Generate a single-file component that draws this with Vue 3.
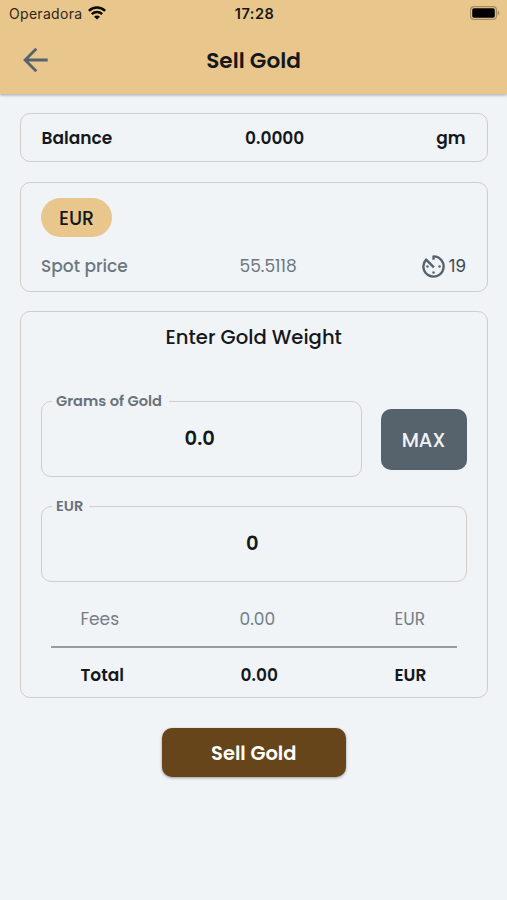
<script setup>
import { ref } from 'vue'

const balance = ref('0.0000')
const spotPrice = ref('55.5118')
const countdown = ref(19)
const grams = ref('0.0')
const amount = ref('0')
</script>

<template>
  <div class="screen">
    <header class="header">
      <div class="status">
        <div class="carrier">
          <span class="carrier-name">Operadora</span>
          <svg class="wifi" viewBox="0 0 18 14">
            <path d="M.9 4.9C5.4.5 12.6.5 17.1 4.9M3.8 8.1c3-2.8 7.4-2.8 10.4 0" fill="none" stroke="#0c0a06" stroke-width="2.5" />
            <path d="M9 13.6 6 10.7c1.7-1.5 4.3-1.5 6 0z" fill="#0c0a06" />
          </svg>
        </div>
        <span class="clock">17:28</span>
        <svg class="battery" viewBox="0 0 30 14">
          <rect x=".6" y=".6" width="25.8" height="12.8" rx="3.4" fill="none" stroke="#a58b60" stroke-width="1.2" />
          <rect x="2.2" y="2.2" width="22.6" height="9.6" rx="1.8" fill="#000" />
          <path d="M27.6 4.6c2.4.8 2.4 4 0 4.8z" fill="#a58b60" />
        </svg>
      </div>
      <div class="toolbar">
        <svg class="back" viewBox="0 0 26 26">
          <path d="M24.7 13H2.5M13.3 1.8 2.1 13l11.2 11.2" fill="none" stroke="#57636c" stroke-width="2.8" />
        </svg>
        <h1 class="title">Sell Gold</h1>
      </div>
    </header>

    <main class="content">
      <section class="card balance">
        <span class="balance-label">Balance</span>
        <span class="balance-value">{{ balance }}</span>
        <span class="balance-unit">gm</span>
      </section>

      <section class="card spot">
        <span class="chip">EUR</span>
        <div class="spot-row">
          <span class="spot-label">Spot price</span>
          <span class="spot-value">{{ spotPrice }}</span>
          <span class="timer">
            <svg class="timer-icon" viewBox="0 0 24 24">
              <path d="M12 5.4V2.3A9.7 9.7 0 1 1 4.9 5.4L12.4 12.9" fill="none" stroke="#57636c" stroke-width="2.3" stroke-linejoin="round" />
              <g fill="#57636c"><circle cx="6.2" cy="12" r="1.2" /><circle cx="17.8" cy="12" r="1.2" /><circle cx="12" cy="17.8" r="1.2" /></g>
            </svg>
            <span class="timer-value">{{ countdown }}</span>
          </span>
        </div>
      </section>

      <section class="card order">
        <h2 class="order-title">Enter Gold Weight</h2>
        <div class="grams-row">
          <div class="field grams">
            <label class="field-label grams-label">Grams of Gold</label>
            <span class="field-value">{{ grams }}</span>
          </div>
          <button class="max">MAX</button>
        </div>
        <div class="field amount">
          <label class="field-label amount-label">EUR</label>
          <span class="field-value">{{ amount }}</span>
        </div>
        <div class="summary fees">
          <span class="s-label">Fees</span><span class="s-value">0.00</span><span class="s-unit">EUR</span>
        </div>
        <div class="summary total">
          <span class="s-label">Total</span><span class="s-value">0.00</span><span class="s-unit">EUR</span>
        </div>
      </section>

      <button class="submit">Sell Gold</button>
    </main>
  </div>
</template>

<style>
body { background: #f0f4f7; }
</style>

<style scoped>
.screen {
  box-sizing: border-box;
  height: 900px;
  background: #f0f4f7;
  color: #14181b;
  font-family: Poppins, Inter, sans-serif;
  white-space: nowrap;
  overflow: hidden;
}
.screen * { box-sizing: border-box; }
h1, h2 { margin: 0; }
button { border: 0; padding: 0; font-family: inherit; }
.header {
  height: 94px;
  background: #e9c78c;
  box-shadow: 0 1px 3px rgba(20, 24, 27, 0.38);
}
.status {
  height: 27px;
  display: grid;
  grid-template-columns: 1fr auto 1fr;
  align-items: center;
  padding: 0 7px 0 9px;
  font-family: Inter, sans-serif;
}
.carrier { display: flex; align-items: center; gap: 6px; }
.carrier-name { font-size: 14px; letter-spacing: 0.3px; color: #2c261b; }
.wifi { width: 18px; height: 14px; margin-top: -2px; }
.clock { font-size: 14.5px; font-weight: 600; letter-spacing: 0.5px; }
.battery { width: 30px; height: 14px; justify-self: end; margin-top: -1px; }
.toolbar {
  height: 66px;
  display: grid;
  grid-template-columns: 60px 1fr 60px;
  align-items: center;
}
.back { width: 26px; height: 26px; margin-left: 22.5px; }
.title { font-size: 21.6px; line-height: 30px; font-weight: 600; text-align: center; padding-top: 1px; }
.content {
  display: flex;
  flex-direction: column;
  align-items: stretch;
  padding: 19px 19.5px 0 20px;
}
.card { border: 1px solid #d0cec6; border-radius: 10px; }
.balance {
  height: 49px;
  display: grid;
  grid-template-columns: 203.5px 1fr auto;
  align-items: center;
  padding: 0 21px 0 20.5px;
  font-size: 17px;
  font-weight: 600;
}
.spot { height: 110px; margin-top: 20px; padding: 15px 20.5px 0 20px; }
.chip {
  display: flex;
  align-items: center;
  justify-content: center;
  width: 71px;
  height: 39px;
  padding-top: 1px;
  border-radius: 20px;
  background: #e9c78c;
  font-size: 19px;
  font-weight: 500;
}
.spot-row {
  height: 28px;
  margin-top: 15px;
  display: grid;
  grid-template-columns: 198.5px 1fr auto;
  align-items: center;
  font-size: 17px;
  color: #6d777f;
}
.spot-label { font-weight: 500; }
.timer { display: flex; align-items: center; gap: 3px; color: #40494f; }
.timer-icon { width: 25px; height: 25px; }
.timer-value { font-family: Inter, sans-serif; font-size: 17px; }
.order { height: 387px; margin-top: 19px; padding: 11px 20px 0; }
.order-title { font-size: 19.6px; line-height: 29px; font-weight: 500; text-align: center; }
.grams-row { display: flex; justify-content: space-between; margin-top: 49px; }
.field {
  position: relative;
  height: 76px;
  display: flex;
  align-items: center;
  justify-content: center;
  border: 1px solid #d0cec6;
  border-radius: 10px;
}
.grams { width: 320.5px; }
.field-label {
  position: absolute;
  left: 10px;
  top: -11px;
  height: 20px;
  padding-left: 4px;
  background: #f0f4f7;
  color: #68727b;
  font-size: 14.6px;
  line-height: 20px;
  font-weight: 600;
}
.grams-label { width: 117px; }
.amount-label { width: 37px; }
.field-value { font-size: 19.5px; font-weight: 600; padding: 0 3px 1px 0; }
.max {
  width: 86px;
  height: 61px;
  margin-top: 8px;
  padding-top: 1px;
  border-radius: 10px;
  background: #57636c;
  color: #f0f4f8;
  font-size: 19.5px;
  font-weight: 500;
}
.amount { margin-top: 29px; }
.summary {
  margin: 0 10px;
  display: grid;
  grid-template-columns: 159px 155px 1fr;
  align-items: center;
  padding-left: 29.5px;
  font-size: 17px;
}
.fees { height: 66px; padding-top: 9px; border-bottom: 2px solid #959da3; color: #747e86; }
.total { height: 52px; padding-top: 1px; font-weight: 600; }
.total .s-value { padding-left: 1px; }
.submit {
  align-self: center;
  width: 184px;
  height: 49px;
  margin-top: 30px;
  padding-top: 1px;
  border-radius: 10px;
  background: #654519;
  color: #fff;
  font-size: 19.5px;
  font-weight: 600;
  box-shadow: 0 1px 3px rgba(20, 24, 27, 0.4);
}
</style>
